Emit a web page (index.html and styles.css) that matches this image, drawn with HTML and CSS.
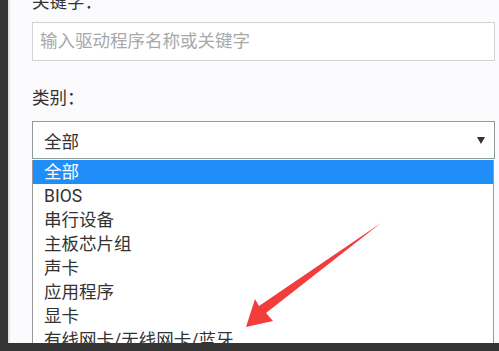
FILE: index.html
```html
<!DOCTYPE html>
<html lang="zh">
<head>
<meta charset="utf-8">
<link rel="stylesheet" href="styles.css">
</head>
<body>
<div class="screen">
  <div class="strip"></div>
  <div class="panel">
    <div class="label label-top">关键字：</div>
    <div class="input">输入驱动程序名称或关键字</div>
    <div class="label label-cat">类别：</div>
    <div class="select">
      <span>全部</span>
      <svg class="caret" width="8" height="7" viewBox="0 0 8 7"><polygon points="0,0 8,0 4,7" fill="#333"/></svg>
    </div>
    <ul class="list">
      <li class="active">全部</li>
      <li>BIOS</li>
      <li>串行设备</li>
      <li>主板芯片组</li>
      <li>声卡</li>
      <li>应用程序</li>
      <li>显卡</li>
      <li>有线网卡/无线网卡/蓝牙</li>
    </ul>
  </div>
</div>
<div class="bottom"></div>
<svg class="arrow" width="499" height="351" viewBox="0 0 499 351">
  <polygon points="246,327 273,321 266,313 381,223 259,306 255,299" fill="#f23d3d"/>
</svg>
</body>
</html>
```

FILE: styles.css
```css
html, body {
  margin: 0;
  padding: 0;
}
body {
  width: 499px;
  height: 351px;
  overflow: hidden;
  background: #353535;
  position: relative;
  font-family: Roboto, "Noto Sans CJK SC", sans-serif;
  color: #333;
}
.screen {
  display: flex;
  height: 343px;
  overflow: hidden;
}
.strip {
  width: 8px;
  background: #353535;
}
.panel {
  flex: 1;
  background: #fbfbfd;
  border-left: 2px solid #e4e4e6;
  padding-left: 22px;
  padding-right: 4px;
}
.label {
  font-size: 17.5px;
  line-height: 24px;
}
.label-top {
  margin-top: -10px;
}
.input {
  margin-top: 8px;
  height: 37px;
  border: 1px solid #d2d2d4;
  background: #fff;
  font-size: 17.5px;
  line-height: 37px;
  padding-left: 7px;
  color: #a8a8a8;
}
.label-cat {
  margin-top: 25px;
}
.select {
  margin-top: 11px;
  height: 36px;
  border: 1px solid #8f9a9a;
  background: #fff;
  display: flex;
  align-items: center;
  justify-content: space-between;
  padding: 0 9px 0 11px;
  font-size: 17.5px;
}
.caret {
  display: block;
}
.list {
  list-style: none;
  margin: 1px 1px 0 0;
  padding: 0;
  background: #fff;
  border: 1px solid #9a9a9a;
  border-top: none;
  font-size: 17.5px;
}
.list li {
  height: 24px;
  line-height: 24px;
  padding-left: 11px;
}
.list li.active {
  background: #1f8ef8;
  color: #fff;
}
.bottom {
  height: 8px;
  background: #353535;
}
.arrow {
  position: absolute;
  left: 0;
  top: 0;
}
```
